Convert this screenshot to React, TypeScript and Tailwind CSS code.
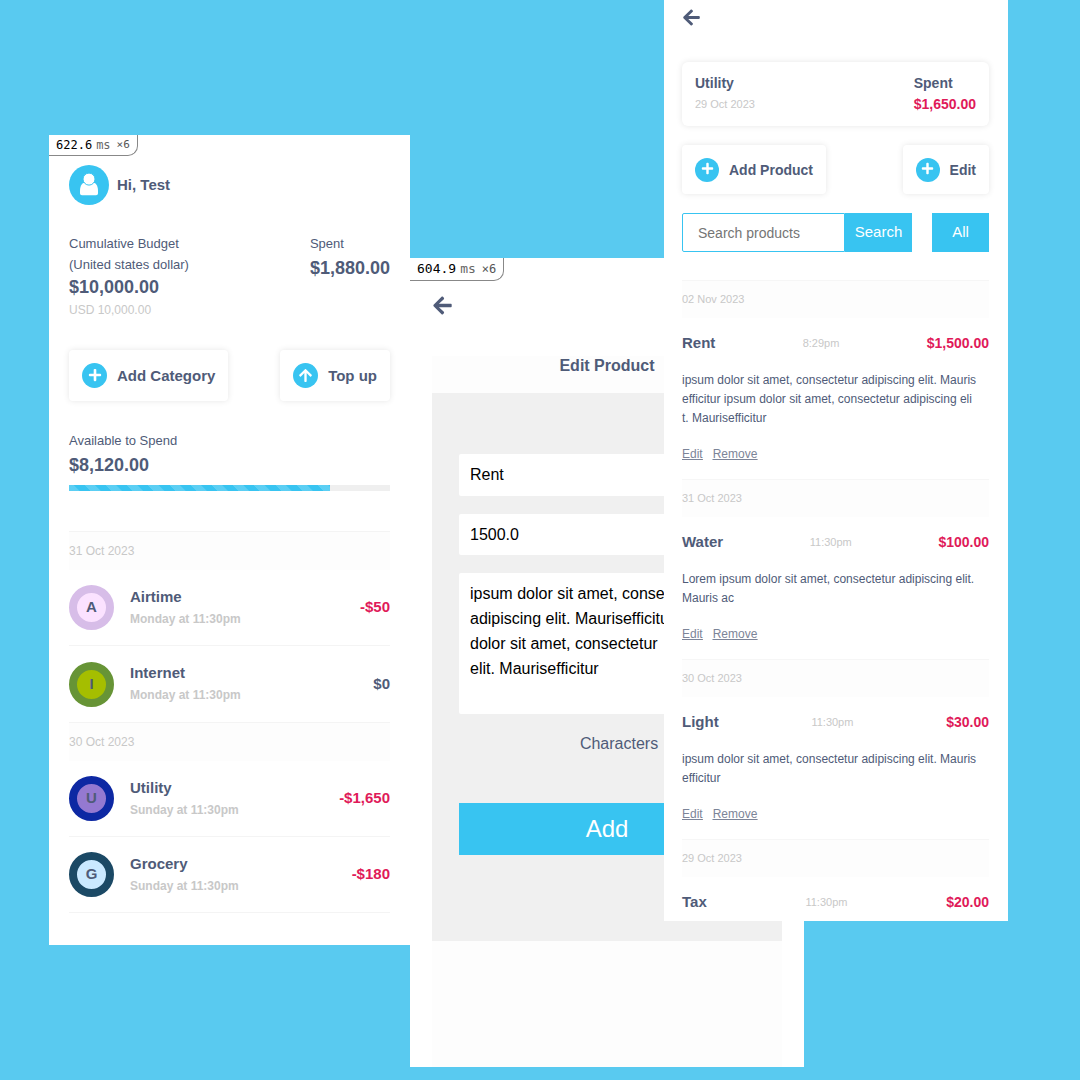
import type { ReactNode } from "react";
import { FaArrowLeft, FaArrowUp, FaPlus } from "react-icons/fa";

function TimingBadge({ value, large = false }: { value: string; large?: boolean }) {
  return (
    <div
      className={
        large
          ? "absolute left-0 top-0 flex h-[23px] items-center rounded-br-[10px] border-b border-r border-[#888] bg-white px-[7px] font-['DejaVu_Sans_Mono',monospace] text-[13px] text-black"
          : "absolute left-0 top-0 flex h-[21px] items-center rounded-br-[10px] border-b border-r border-[#888] bg-white px-[7px] font-['DejaVu_Sans_Mono',monospace] text-xs text-black"
      }
    >
      <span>{value}</span>
      <span className="ml-1 text-[#666]">ms</span>
      <span className={large ? "ml-1.5 text-xs text-[#555]" : "ml-1.5 text-[11px] text-[#555]"}>×6</span>
    </div>
  );
}

function UserIcon() {
  return (
    <svg viewBox="0 0 40 40" className="size-10" aria-hidden="true">
      <circle cx="20" cy="20" r="20" fill="#38c4f1" />
      <path
        d="M15.5 17.8C12.4 18.2 11 21.6 11 26.4V28.2C11 29.5 11.8 30.2 13 30.2H27C28.2 30.2 29 29.5 29 28.2V26.4C29 21.6 27.6 18.2 24.5 17.8Z"
        fill="#fff"
      />
      <circle cx="20" cy="14.1" r="6" fill="#fff" stroke="#38c4f1" strokeWidth="1" />
    </svg>
  );
}

function ActionButton({ icon, children }: { icon: ReactNode; children: ReactNode }) {
  return (
    <button
      type="button"
      className="flex h-[51px] items-center gap-[10px] rounded bg-white px-[13px] text-[15px] font-bold shadow-[0_0_6px_rgba(0,0,0,0.1)]"
    >
      <span className="flex size-[25px] items-center justify-center rounded-full bg-[#38c4f1] text-white">{icon}</span>
      <span className="pt-0.5">{children}</span>
    </button>
  );
}

function SmallActionButton({ children }: { children: ReactNode }) {
  return (
    <button
      type="button"
      className="flex h-[49px] items-center gap-[10px] rounded bg-white px-[13px] text-sm font-bold shadow-[0_0_6px_rgba(0,0,0,0.1)]"
    >
      <span className="flex size-6 items-center justify-center rounded-full bg-[#38c4f1] pb-0.5 text-white">
        <FaPlus className="size-[13px]" />
      </span>
      {children}
    </button>
  );
}

type Category = {
  name: string;
  when: string;
  amount: string;
  ring: string;
};

const days: { date: string; items: Category[] }[] = [
  {
    date: "31 Oct 2023",
    items: [
      { name: "Airtime", when: "Monday at 11:30pm", amount: "-$50", ring: "border-[#d7bde8] bg-[#fbe2ff]" },
      { name: "Internet", when: "Monday at 11:30pm", amount: "$0", ring: "border-[#679436] bg-[#a5be00]" },
    ],
  },
  {
    date: "30 Oct 2023",
    items: [
      { name: "Utility", when: "Sunday at 11:30pm", amount: "-$1,650", ring: "border-[#0d28a3] bg-[#9479d1]" },
      { name: "Grocery", when: "Sunday at 11:30pm", amount: "-$180", ring: "border-[#1b4965] bg-[#cae9ff]" },
    ],
  },
];

function BudgetScreen() {
  return (
    <section className="relative col-start-2 row-start-1 mt-[135px] bg-white px-5 pb-8 pt-[30px]">
      <TimingBadge value="622.6" />
      <header className="flex items-center gap-2 text-[15px] font-bold">
        <UserIcon />
        <h1>Hi, Test</h1>
      </header>

      <div className="mt-7 flex justify-between">
        <div>
          <p className="text-[13px] leading-[21px]">
            Cumulative Budget
            <br />
            (United states dollar)
          </p>
          <p className="text-lg font-bold leading-6">$10,000.00</p>
          <p className="text-xs leading-[22px] text-[#c8c8c8]">USD 10,000.00</p>
        </div>
        <div>
          <p className="text-[13px] leading-[21px]">Spent</p>
          <p className="text-lg font-bold leading-7">$1,880.00</p>
        </div>
      </div>

      <div className="mt-[29px] flex justify-between">
        <ActionButton icon={<FaPlus className="mb-0.5 size-[14px]" />}>Add Category</ActionButton>
        <ActionButton icon={<FaArrowUp className="size-[15px]" />}>Top up</ActionButton>
      </div>

      <p className="mt-[29px] text-[13px] leading-[22px]">Available to Spend</p>
      <p className="text-lg font-bold leading-[27px]">$8,120.00</p>
      <div className="mt-1.5 h-1.5 bg-[#efefef]">
        <div
          className="h-full bg-[#38c4f1] bg-[repeating-linear-gradient(45deg,rgba(255,255,255,0.18)_0px,rgba(255,255,255,0.18)_7px,transparent_8px,transparent_15px)]"
          style={{ width: `${(8120 / 10000) * 100}%` }}
        />
      </div>

      <div className="mt-10">
        {days.map((day) => (
          <div key={day.date}>
            <h2 className="border-t border-[#f4f4f4] bg-[#fdfdfd] text-xs leading-[38px] text-[#c8c8c8]">{day.date}</h2>
            <ul>
              {day.items.map((item, i) => (
                <li
                  key={item.name}
                  className={
                    day.date === "31 Oct 2023" && i === 1
                      ? "flex h-[76px] items-center"
                      : "flex h-[76px] items-center border-b border-[#f4f4f4]"
                  }
                >
                  <span
                    className={`flex size-[45px] items-center justify-center rounded-full border-8 text-[15px] font-bold ${item.ring}`}
                  >
                    {item.name[0]}
                  </span>
                  <div className="ml-4 flex-1 font-bold">
                    <p className="text-[15px] leading-[22px]">{item.name}</p>
                    <p className="text-xs leading-[22px] text-[#c8c8c8]">{item.when}</p>
                  </div>
                  <p className={item.amount === "$0" ? "text-[15px] font-bold" : "text-[15px] font-bold text-[#e01a59]"}>
                    {item.amount}
                  </p>
                </li>
              ))}
            </ul>
          </div>
        ))}
      </div>
    </section>
  );
}

function EditProductScreen() {
  return (
    <section className="relative col-span-2 col-start-3 row-start-1 mt-[258px] bg-white px-[22px] pt-[37px]">
      <TimingBadge value="604.9" large />
      <a href="#back" aria-label="Back" className="block w-5">
        <FaArrowLeft className="size-[21px]" />
      </a>
      <div className="mt-10 bg-[#fdfdfd] pb-[126px]">
        <h2 className="pb-[17px] text-center text-base font-bold leading-5">Edit Product</h2>
        <form className="bg-[#f0f0f0] px-[27px] pb-[86px] pt-[61px]" onSubmit={(e) => e.preventDefault()}>
          <input
            aria-label="Product name"
            defaultValue="Rent"
            className="block h-[42px] w-full rounded-xs bg-white px-[11px] text-base text-black"
          />
          <input
            aria-label="Amount"
            defaultValue="1500.0"
            className="mt-[18px] block h-[41px] w-full rounded-xs bg-white px-[11px] text-base text-black"
          />
          <textarea
            aria-label="Description"
            defaultValue={
              "ipsum dolor sit amet, consectetur\nadipiscing elit. Maurisefficitur ipsum\ndolor sit amet, consectetur\nelit. Maurisefficitur"
            }
            className="mt-[18px] block h-[141px] w-full resize-none overflow-hidden rounded-xs bg-white px-[11px] py-2 text-base leading-[25px] text-black"
          />
          <p className="mt-[18px] pl-6 text-center text-base leading-6">Characters</p>
          <button type="submit" className="mt-[47px] block h-[52px] w-full bg-[#38c4f1] text-2xl text-white">
            Add
          </button>
        </form>
      </div>
    </section>
  );
}

const products = [
  {
    date: "02 Nov 2023",
    name: "Rent",
    time: "8:29pm",
    amount: "$1,500.00",
    text: "ipsum dolor sit amet, consectetur adipiscing elit. Mauris\nefficitur ipsum dolor sit amet, consectetur adipiscing eli\nt. Maurisefficitur",
  },
  {
    date: "31 Oct 2023",
    name: "Water",
    time: "11:30pm",
    amount: "$100.00",
    text: "Lorem ipsum dolor sit amet, consectetur adipiscing elit.\nMauris ac",
  },
  {
    date: "30 Oct 2023",
    name: "Light",
    time: "11:30pm",
    amount: "$30.00",
    text: "ipsum dolor sit amet, consectetur adipiscing elit. Mauris\nefficitur",
  },
  { date: "29 Oct 2023", name: "Tax", time: "11:30pm", amount: "$20.00", text: "" },
];

function UtilityScreen() {
  return (
    <section className="relative z-10 col-span-2 col-start-4 row-start-1 bg-white pb-[7px] pl-[18px] pr-[19px] pt-2">
      <a href="#back" aria-label="Back" className="block w-5">
        <FaArrowLeft className="size-[19px]" />
      </a>

      <div className="mt-[35px] flex justify-between rounded-md bg-white px-[13px] py-[11px] text-sm font-bold leading-[21px] shadow-[0_0_6px_rgba(0,0,0,0.1)]">
        <div>
          <h2>Utility</h2>
          <p className="text-[11px] font-normal leading-[21px] text-[#c8c8c8]">29 Oct 2023</p>
        </div>
        <div>
          <p>Spent</p>
          <p className="text-[#e01a59]">$1,650.00</p>
        </div>
      </div>

      <div className="mt-[19px] flex justify-between">
        <SmallActionButton>Add Product</SmallActionButton>
        <SmallActionButton>Edit</SmallActionButton>
      </div>

      <form className="mt-[19px] flex h-[39px]" onSubmit={(e) => e.preventDefault()}>
        <input
          type="search"
          aria-label="Search products"
          placeholder="Search products"
          className="h-full min-w-0 flex-1 rounded-l-xs border border-[#38c4f1] px-[15px] text-sm placeholder:text-[#757575]"
        />
        <button type="submit" className="h-full w-[67px] bg-[#38c4f1] text-[15px] text-white">
          Search
        </button>
        <button type="button" className="ml-5 h-full w-[57px] bg-[#38c4f1] text-[15px] text-white">
          All
        </button>
      </form>

      <div className="mt-7">
        {products.map((p) => (
          <article key={p.date}>
            <p className="border-t border-[#f6f6f6] bg-[#fdfdfd] text-[11px] leading-[37px] text-[#c8c8c8]">{p.date}</p>
            <div className="mt-[13px] flex items-center justify-between leading-6">
              <h3 className="text-[15px] font-bold">{p.name}</h3>
              <span className="text-[11px] text-[#c8c8c8]">{p.time}</span>
              <span className="text-sm font-bold text-[#e01a59]">{p.amount}</span>
            </div>
            {p.text && (
              <>
                <p className="mt-4 whitespace-pre text-xs leading-[19px]">{p.text}</p>
                <div className="mt-[17px] flex gap-[10px] pb-4 text-xs leading-[18px] text-[#7c8498] underline">
                  <a href="#edit">Edit</a>
                  <a href="#remove">Remove</a>
                </div>
              </>
            )}
          </article>
        ))}
      </div>
    </section>
  );
}

export default function App() {
  return (
    <main className="grid min-h-screen grid-cols-[minmax(0,49fr)_minmax(0,361fr)_minmax(0,254fr)_minmax(0,140fr)_minmax(0,204fr)_minmax(0,72fr)] items-start overflow-hidden bg-[#59caf0] font-['Liberation_Sans',Arial,sans-serif] text-[#4f5b78]">
      <BudgetScreen />
      <EditProductScreen />
      <UtilityScreen />
    </main>
  );
}
